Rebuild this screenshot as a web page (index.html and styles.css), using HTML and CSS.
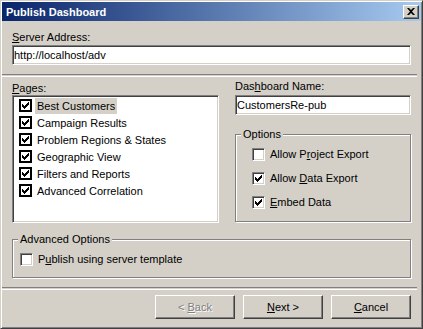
FILE: index.html
```html
<!DOCTYPE html>
<html lang="en">
<head>
    <meta charset="UTF-8">
    <title>Publish Dashboard</title>
    <link rel="stylesheet" href="styles.css">
</head>
<body>
    <svg width="0" height="0" class="defs">
        <symbol id="tick" viewBox="0 0 7 7">
            <path d="M0 2H1V3H2V4H3V3H4V2H5V1H6V0H7V3H6V4H5V5H4V6H3V7H2V6H1V5H0Z"/>
        </symbol>
    </svg>
    <div class="window">
        <div class="titlebar">
            <span class="title">Publish Dashboard</span>
            <span class="close-btn">
                <svg width="8" height="7" viewBox="0 0 8 7"><path d="M0 0H2L4 2 6 0H8L5 3.5 8 7H6L4 5 2 7H0L3 3.5Z"/></svg>
            </span>
        </div>

        <div class="content">
            <div class="label"><u>S</u>erver Address:</div>
            <input class="field" type="text" value="http://localhost/adv">

            <div class="separator"></div>

            <div class="panes">
                <div class="pages">
                    <div class="label pages-label"><u>P</u>ages:</div>
                    <ul class="page-list" id="pageList"></ul>
                </div>
                <div class="side">
                    <div class="label">Das<u>h</u>board Name:</div>
                    <input class="field name-field" type="text" value="CustomersRe-pub">

                    <div class="group options">
                        <span class="group-title">Options</span>
                        <div class="check-row">
                            <span class="box3d"></span>
                            <span>Allow P<u>r</u>oject Export</span>
                        </div>
                        <div class="check-row">
                            <span class="box3d"><svg class="tick"><use href="#tick"/></svg></span>
                            <span>Allow <u>D</u>ata Export</span>
                        </div>
                        <div class="check-row">
                            <span class="box3d"><svg class="tick"><use href="#tick"/></svg></span>
                            <span><u>E</u>mbed Data</span>
                        </div>
                    </div>
                </div>
            </div>

            <div class="group advanced">
                <span class="group-title">Advanced Options</span>
                <div class="check-row">
                    <span class="box3d"></span>
                    <span>P<u>u</u>blish using server template</span>
                </div>
            </div>

            <div class="separator bottom"></div>

            <div class="buttons">
                <button class="btn disabled">&lt; <u>B</u>ack</button>
                <button class="btn"><u>N</u>ext &gt;</button>
                <button class="btn"><u>C</u>ancel</button>
            </div>
        </div>
    </div>

    <script>
        const pages = [
            'Best Customers',
            'Campaign Results',
            'Problem Regions & States',
            'Geographic View',
            'Filters and Reports',
            'Advanced Correlation'
        ];

        const list = document.getElementById('pageList');
        pages.forEach((name, i) => {
            const item = document.createElement('li');
            item.innerHTML = '<span class="box-flat"><svg class="tick"><use href="#tick"/></svg></span>';
            const text = document.createElement('span');
            text.className = i === 0 ? 'item-text selected' : 'item-text';
            text.textContent = name;
            item.appendChild(text);
            list.appendChild(item);
        });
    </script>
</body>
</html>
```

FILE: styles.css
```css
body {
    margin: 0;
    font-family: "Liberation Sans", Arial, sans-serif;
    font-size: 11px;
    color: #000;
}
.defs {
    position: absolute;
}
.window {
    box-sizing: border-box;
    width: 423px;
    height: 329px;
    padding: 1px;
    background: #d4d0c8;
    border: 1px solid;
    border-color: #d4d0c8 #404040 #404040 #d4d0c8;
    box-shadow: inset 1px 1px 0 #fff, inset -1px -1px 0 #808080;
}
.titlebar {
    height: 19px;
    display: flex;
    align-items: center;
    justify-content: space-between;
    padding: 0 2px 0 4px;
    background: linear-gradient(to right, #0a246a, #a6caf0);
}
.title {
    color: #fff;
    font-weight: bold;
    font-size: 11px;
}
.close-btn {
    box-sizing: border-box;
    width: 16px;
    height: 14px;
    display: flex;
    align-items: center;
    justify-content: center;
    background: #d4d0c8;
    border: 1px solid;
    border-color: #fff #404040 #404040 #fff;
    box-shadow: inset -1px -1px 0 #808080;
    padding: 0 1px 1px 0;
}
.content {
    padding: 0 10px;
}
.label {
    line-height: 13px;
}
.content > .label:first-child {
    margin-top: 10px;
}
.field {
    display: block;
    box-sizing: border-box;
    width: 100%;
    height: 20px;
    margin: 1px 0 0;
    padding: 0 1px;
    font: inherit;
    color: #000;
    background: #fff;
    border: 1px solid;
    border-color: #808080 #fff #fff #808080;
    box-shadow: inset 1px 1px 0 #404040, inset -1px -1px 0 #d4d0c8;
    outline: none;
}
.separator {
    height: 1px;
    margin: 9px -6px 0 -10px;
    border-top: 1px solid #808080;
    border-bottom: 1px solid #fff;
}
.panes {
    display: flex;
    gap: 16px;
    margin-top: 3px;
}
.pages {
    width: 207px;
}
.pages-label {
    padding-top: 2px;
}
.page-list {
    box-sizing: border-box;
    height: 128px;
    margin: 0;
    padding: 1px 0 0 6px;
    list-style: none;
    background: #fff;
    border: 1px solid;
    border-color: #808080 #fff #fff #808080;
    box-shadow: inset 1px 1px 0 #404040, inset -1px -1px 0 #d4d0c8;
}
.page-list li {
    height: 17px;
    display: flex;
    align-items: center;
}
.box-flat {
    box-sizing: border-box;
    width: 13px;
    height: 13px;
    display: flex;
    align-items: center;
    justify-content: center;
    background: #fff;
    border: 2px solid #000;
}
.tick {
    width: 7px;
    height: 7px;
    fill: #000;
    shape-rendering: crispEdges;
}
.item-text {
    margin-left: 3px;
    padding: 0 2px;
    line-height: 16px;
}
.item-text.selected {
    background: #d4d0c8;
}
.side {
    flex: 1;
}
.name-field {
    margin-top: 2px;
}
.group {
    position: relative;
    box-sizing: border-box;
    border: 1px solid #808080;
    box-shadow: inset 1px 1px 0 #fff, 1px 1px 0 #fff;
}
.group-title {
    position: absolute;
    top: -7px;
    left: 5px;
    padding: 0 2px;
    line-height: 13px;
    background: #d4d0c8;
}
.options {
    height: 88px;
    margin-top: 19px;
    padding: 7px 0 0 16px;
}
.options .check-row {
    height: 24px;
}
.check-row {
    display: flex;
    align-items: center;
    gap: 5px;
}
.box3d {
    box-sizing: border-box;
    width: 13px;
    height: 13px;
    display: flex;
    align-items: center;
    justify-content: center;
    background: #fff;
    border: 1px solid;
    border-color: #808080 #fff #fff #808080;
    box-shadow: inset 1px 1px 0 #404040, inset -1px -1px 0 #d4d0c8;
}
.advanced {
    height: 39px;
    margin-top: 16px;
    padding: 9px 0 0 7px;
}
.advanced .check-row {
    height: 20px;
}
.separator.bottom {
    margin-top: 9px;
}
.buttons {
    display: flex;
    justify-content: flex-end;
    gap: 8px;
    margin-top: 5px;
}
.btn {
    box-sizing: border-box;
    width: 80px;
    height: 24px;
    padding: 0;
    font: inherit;
    color: #000;
    background: #d4d0c8;
    border: 1px solid;
    border-color: #fff #404040 #404040 #fff;
    box-shadow: inset -1px -1px 0 #808080;
}
.btn.disabled {
    color: #808080;
    text-shadow: 1px 1px 0 #fff;
}
```
